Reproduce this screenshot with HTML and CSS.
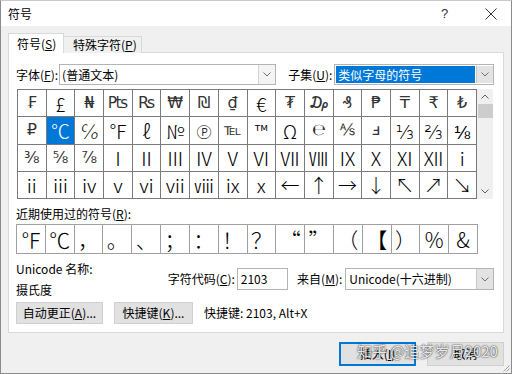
FILE: index.html
```
<!DOCTYPE html>
<html lang="zh-CN">
<head>
    <meta charset="UTF-8">
    <title>符号</title>
    <link rel="stylesheet" href="styles.css">
</head>
<body>
<div class="window">
    <div class="titlebar">
        <span class="title">符号</span>
        <span class="help">?</span>
        <span class="close">
            <svg width="12" height="12" viewBox="0 0 12 12"><path d="M0.5 0.5 L11.5 11.5 M11.5 0.5 L0.5 11.5" stroke="#333" stroke-width="1" fill="none"/></svg>
        </span>
    </div>

    <div class="content">
        <div class="tabs">
            <div class="tab active">符号(<u>S</u>)</div>
            <div class="tab">特殊字符(<u>P</u>)</div>
        </div>

        <div class="panel">
            <div class="font-row">
                <span class="label">字体(<u>F</u>):</span>
                <div class="combo font-combo">
                    <span class="value">(普通文本)</span>
                    <span class="drop"><svg width="8" height="5" viewBox="0 0 8 5"><polyline points="0.5,0.5 4,4 7.5,0.5" stroke="#707070" fill="none"/></svg></span>
                </div>
                <span class="label subset-label">子集(<u>U</u>):</span>
                <div class="combo subset-combo">
                    <span class="value selected">类似字母的符号</span>
                    <span class="drop dark"><svg width="8" height="5" viewBox="0 0 8 5"><polyline points="0.5,0.5 4,4 7.5,0.5" stroke="#707070" fill="none"/></svg></span>
                </div>
            </div>

            <div class="symbols">
                <div class="grid">
                    <div class="cell dj">₣</div><div class="cell">£</div><div class="cell dj">₦</div><div class="cell dj">₧</div>
                    <div class="cell dj">₨</div><div class="cell dj">₩</div><div class="cell dj">₪</div><div class="cell dj">₫</div>
                    <div class="cell">€</div><div class="cell dj">₮</div><div class="cell dj">₯</div><div class="cell dj">₰</div>
                    <div class="cell dj">₱</div><div class="cell dj">₸</div><div class="cell dj">₹</div><div class="cell dj">₺</div>

                    <div class="cell dj">₽</div><div class="cell current">℃</div><div class="cell">℅</div><div class="cell">℉</div>
                    <div class="cell">ℓ</div><div class="cell">№</div><div class="cell">℗</div><div class="cell dj">℡</div>
                    <div class="cell">™</div><div class="cell">Ω</div><div class="cell dj">℮</div><div class="cell dj">⅍</div>
                    <div class="cell dj">ⅎ</div><div class="cell">⅓</div><div class="cell">⅔</div><div class="cell">⅛</div>

                    <div class="cell dj">⅜</div><div class="cell dj">⅝</div><div class="cell dj">⅞</div><div class="cell">Ⅰ</div>
                    <div class="cell">Ⅱ</div><div class="cell">Ⅲ</div><div class="cell">Ⅳ</div><div class="cell">Ⅴ</div>
                    <div class="cell">Ⅵ</div><div class="cell">Ⅶ</div><div class="cell">Ⅷ</div><div class="cell">Ⅸ</div>
                    <div class="cell">Ⅹ</div><div class="cell">Ⅺ</div><div class="cell">Ⅻ</div><div class="cell">ⅰ</div>

                    <div class="cell">ⅱ</div><div class="cell">ⅲ</div><div class="cell">ⅳ</div><div class="cell">ⅴ</div>
                    <div class="cell">ⅵ</div><div class="cell">ⅶ</div><div class="cell">ⅷ</div><div class="cell">ⅸ</div>
                    <div class="cell">ⅹ</div><div class="cell">←</div><div class="cell">↑</div><div class="cell">→</div>
                    <div class="cell">↓</div><div class="cell">↖</div><div class="cell">↗</div><div class="cell">↘</div>
                </div>
                <div class="scrollbar">
                    <span class="arrow"><svg width="8" height="5" viewBox="0 0 8 5"><polyline points="0.5,4.5 4,1 7.5,4.5" stroke="#606060" fill="none"/></svg></span>
                    <span class="thumb"></span>
                    <span class="track"></span>
                    <span class="arrow"><svg width="8" height="5" viewBox="0 0 8 5"><polyline points="0.5,0.5 4,4 7.5,0.5" stroke="#606060" fill="none"/></svg></span>
                </div>
            </div>

            <div class="label recent-label">近期使用过的符号(<u>R</u>):</div>
            <div class="recent">
                <div class="cell">℉</div><div class="cell">℃</div><div class="cell">，</div><div class="cell">。</div>
                <div class="cell">、</div><div class="cell">；</div><div class="cell">：</div><div class="cell">！</div>
                <div class="cell">？</div><div class="cell">“</div><div class="cell">”</div><div class="cell">（</div>
                <div class="cell">【</div><div class="cell">）</div><div class="cell">%</div><div class="cell">&amp;</div>
            </div>

            <div class="info">
                <div class="name">
                    <div>Unicode 名称:</div>
                    <div>摄氏度</div>
                </div>
                <span class="label">字符代码(<u>C</u>):</span>
                <div class="textbox">2103</div>
                <span class="label from-label">来自(<u>M</u>):</span>
                <div class="combo from-combo">
                    <span class="value">Unicode(十六进制)</span>
                    <span class="drop dark"><svg width="8" height="5" viewBox="0 0 8 5"><polyline points="0.5,0.5 4,4 7.5,0.5" stroke="#707070" fill="none"/></svg></span>
                </div>
            </div>

            <div class="actions">
                <button class="btn autocorrect">自动更正(<u>A</u>)...</button>
                <button class="btn shortcut">快捷键(<u>K</u>)...</button>
                <span class="label">快捷键: 2103, Alt+X</span>
            </div>
        </div>

        <div class="footer">
            <button class="btn big default">插入(<u>I</u>)</button>
            <button class="btn big">取消</button>
        </div>
    </div>

    <div class="watermark">知乎 @追梦岁月2020</div>
    <svg class="grip" width="7" height="7" viewBox="0 0 7 7">
        <path d="M6.5 0.5 L0.5 6.5 M6.5 3.5 L3.5 6.5" stroke="#a0a0a0" fill="none"/>
    </svg>
</div>
</body>
</html>
```

FILE: styles.css
```
* {
    box-sizing: border-box;
}
body {
    margin: 0;
    font-family: "Noto Sans CJK SC", sans-serif;
    font-size: 12px;
    color: #000;
}
.window {
    position: relative;
    width: 512px;
    height: 374px;
    background: #f0f0f0;
    border: 1px solid #8c8c8c;
    border-top-color: #c8c8c8;
    overflow: hidden;
}
.titlebar {
    height: 25px;
    background: #fff;
    display: flex;
    align-items: center;
    padding-left: 7px;
}
.title {
    flex: 1;
    line-height: 16px;
}
.help {
    width: 12px;
    margin-right: 32px;
    color: #333;
    font-family: "Liberation Sans", sans-serif;
    font-size: 13px;
}
.close {
    width: 12px;
    margin-right: 14px;
    display: flex;
}
.content {
    padding: 7px 7px 0 7px;
}
.tabs {
    display: flex;
    align-items: flex-end;
    height: 20px;
    margin-bottom: -1px;
    position: relative;
}
.tab {
    height: 17px;
    line-height: 16px;
    padding: 0 0 0 9px;
    width: 78px;
    white-space: nowrap;
    background: #f0f0f0;
    border: 1px solid #d9d9d9;
    border-left: none;
    border-bottom: none;
}
.tab.active {
    height: 20px;
    width: 56px;
    line-height: 19px;
    padding-left: 8px;
    background: #fff;
    border-left: 1px solid #d9d9d9;
}
.panel {
    background: #fff;
    border: 1px solid #d9d9d9;
    padding: 11px 9px 8px 7px;
}
.label {
    line-height: 16px;
    white-space: nowrap;
}
.font-row {
    display: flex;
    align-items: center;
    height: 21px;
}
.font-row > .label {
    margin-right: 1px;
}
.combo {
    display: flex;
    height: 21px;
    border: 1px solid #b4b4b4;
    background: #fff;
}
.combo .value {
    flex: 1;
    padding-left: 2px;
    line-height: 19px;
    white-space: nowrap;
}
.combo .drop {
    width: 17px;
    display: flex;
    align-items: center;
    justify-content: center;
    background: #f4f4f4;
    border-left: 1px solid #d4d4d4;
}
.combo .drop.dark {
    background: #e3e3e3;
    border-left-color: #c8c8c8;
}
.font-combo {
    width: 219px;
}
.font-row .subset-label {
    margin-left: 12px;
    margin-right: 2px;
}
.subset-combo {
    width: 161px;
    padding: 1px 0 1px 1px;
}
.subset-combo .value {
    line-height: 17px;
}
.value.selected {
    background: #0078d7;
    color: #fff;
    margin-right: 1px;
}
.symbols {
    display: flex;
    margin-top: 4px;
    margin-left: 1px;
}
.grid {
    width: 460px;
    height: 110px;
    display: grid;
    grid-template-columns: repeat(16, 1fr);
    grid-template-rows: repeat(4, 1fr);
    gap: 1px;
    background: #7a7a7a;
    border: 1px solid #7a7a7a;
}
.cell {
    background: #fff;
    display: flex;
    align-items: center;
    justify-content: center;
    font-family: "Noto Sans CJK SC", "DejaVu Sans", sans-serif;
    font-weight: 300;
    font-size: 19px;
    line-height: 1;
    overflow: hidden;
}
.cell.dj {
    font-family: "DejaVu Sans", sans-serif;
    font-weight: 400;
    font-size: 16px;
    color: #333;
}
.cell.current {
    background: #0078d7;
    color: #fff;
}
.scrollbar {
    width: 16px;
    background: #f0f0f0;
    display: flex;
    flex-direction: column;
    align-items: center;
}
.scrollbar .arrow {
    height: 15px;
    display: flex;
    align-items: center;
}
.scrollbar .thumb {
    width: 15px;
    height: 14px;
    background: #cdcdcd;
}
.scrollbar .track {
    flex: 1;
}
.recent-label {
    margin-top: 7px;
}
.recent {
    margin-top: 2px;
    width: 462px;
    height: 30px;
    display: grid;
    grid-template-columns: repeat(16, 1fr);
    gap: 1px;
    background: #a0a0a0;
    border: 1px solid #a0a0a0;
}
.recent .cell {
    font-size: 21px;
}
.info {
    display: flex;
    align-items: center;
    margin-top: 4px;
}
.name {
    width: 154px;
    line-height: 21px;
}
.textbox {
    width: 52px;
    height: 22px;
    margin-left: 2px;
    border: 1px solid #b4b4b4;
    padding-left: 3px;
    line-height: 20px;
}
.from-label {
    margin-left: 9px;
    margin-right: 3px;
}
.from-combo {
    width: 151px;
    height: 22px;
}
.from-combo .value {
    line-height: 20px;
    padding-left: 3px;
}
.actions {
    display: flex;
    align-items: center;
    margin-top: 2px;
}
.btn {
    font-family: "Noto Sans CJK SC", sans-serif;
    font-size: 12px;
    height: 22px;
    padding: 0;
    background: #e1e1e1;
    border: 1px solid #d0d0d0;
    color: #000;
    line-height: 20px;
}
.autocorrect {
    width: 87px;
    margin-right: 11px;
}
.shortcut {
    width: 79px;
    margin-right: 11px;
}
.footer {
    display: flex;
    justify-content: flex-end;
    gap: 11px;
    padding-top: 9px;
}
.btn.big {
    width: 77px;
    height: 24px;
}
.btn.default {
    border: 2px solid #0078d7;
}
.watermark {
    position: absolute;
    left: 356px;
    top: 340px;
    font-size: 15px;
    line-height: 20px;
    color: rgba(255, 255, 255, 0.9);
    text-shadow: 0 0 2px rgba(0, 0, 0, 0.7), 0 0 1px rgba(0, 0, 0, 0.6);
    white-space: nowrap;
}
.grip {
    position: absolute;
    right: 1px;
    bottom: 1px;
}
```
